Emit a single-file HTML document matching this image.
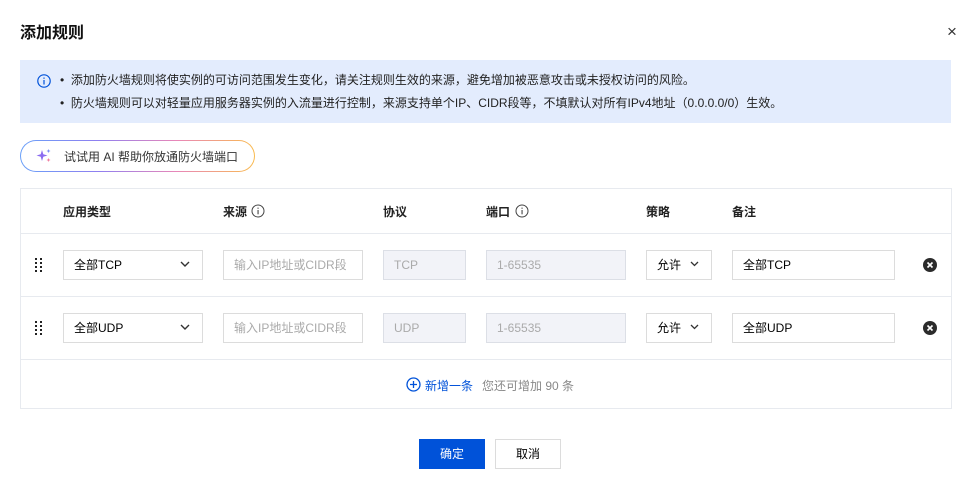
<!DOCTYPE html>
<html><head><meta charset="utf-8"><style>
*{box-sizing:border-box;margin:0;padding:0}
body{width:979px;height:487px;background:#fff;font-family:"Liberation Sans","Noto Sans CJK SC",sans-serif;color:#000;position:relative;overflow:hidden;font-size:12px}
.a{position:absolute}
.inp{position:absolute;height:30px;border:1px solid #dcdcdc;background:#fff;font-size:12px;line-height:28px;padding-left:10px;color:#000}
.dis{background:#f2f3f8;color:#aaa;border-color:#dcdfe6}
.ph{color:#aaa}
.hd{position:absolute;top:203px;font-weight:bold;font-size:12px;color:#222}
.hl{position:absolute;left:21px;width:930px;height:1px;background:#e7eaef}
</style></head><body>
<div class="a" style="left:20px;top:19px;font-size:16px;font-weight:bold;color:#111">添加规则</div>
<div class="a" style="left:947px;top:22px;font-size:17px;color:#333">×</div>

<div class="a" style="left:20px;top:60px;width:931px;height:63px;background:#e3ecfd"></div>
<svg class="a" style="left:37px;top:74px" width="14" height="14" viewBox="0 0 14 14"><circle cx="7" cy="7" r="6.2" fill="none" stroke="#0052d9" stroke-width="1.2"/><rect x="6.4" y="6" width="1.2" height="4.5" fill="#0052d9"/><rect x="6.4" y="3.5" width="1.2" height="1.3" fill="#0052d9"/></svg>
<div class="a" style="left:60px;top:72px;color:#222;line-height:16px">•&nbsp; 添加防火墙规则将使实例的可访问范围发生变化，请关注规则生效的来源，避免增加被恶意攻击或未授权访问的风险。</div>
<div class="a" style="left:60px;top:95px;color:#222;line-height:16px">•&nbsp; 防火墙规则可以对轻量应用服务器实例的入流量进行控制，来源支持单个IP、CIDR段等，不填默认对所有IPv4地址（0.0.0.0/0）生效。</div>

<div class="a" style="left:20px;top:140px;width:235px;height:32px;border-radius:16px;padding:1px;background:linear-gradient(90deg,#6aa0f8,#8f7ff0,#e887b8,#f9bb4f)"><div style="width:100%;height:100%;border-radius:15px;background:#fff"></div></div>
<svg class="a" style="left:36px;top:148px" width="16" height="16" viewBox="0 0 16 16"><path d="M6 2 L7.3 6.2 L11.5 7.5 L7.3 8.8 L6 13 L4.7 8.8 L0.5 7.5 L4.7 6.2Z" fill="#8b6cf0"/><path d="M12.5 1 L13.1 2.4 L14.5 3 L13.1 3.6 L12.5 5 L11.9 3.6 L10.5 3 L11.9 2.4Z" fill="#7b8ff5"/><path d="M12.5 10 L13.1 11.4 L14.5 12 L13.1 12.6 L12.5 14 L11.9 12.6 L10.5 12 L11.9 11.4Z" fill="#f07fa0"/></svg>
<div class="a" style="left:64px;top:148px;color:#333;font-size:12px">试试用 AI 帮助你放通防火墙端口</div>

<div class="a" style="left:20px;top:188px;width:932px;height:221px;border:1px solid #e7eaef"></div>
<div class="hl" style="top:233px"></div>
<div class="hl" style="top:296px"></div>
<div class="hl" style="top:359px"></div>

<div class="hd" style="left:63px">应用类型</div>
<div class="hd" style="left:223px">来源</div>
<svg class="a" style="left:251px;top:204px" width="14" height="14" viewBox="0 0 14 14"><circle cx="7" cy="7" r="6" fill="none" stroke="#444" stroke-width="1"/><rect x="6.5" y="6" width="1.1" height="4.3" fill="#444"/><rect x="6.5" y="3.6" width="1.1" height="1.2" fill="#444"/></svg>
<div class="hd" style="left:383px">协议</div>
<div class="hd" style="left:486px">端口</div>
<svg class="a" style="left:515px;top:204px" width="14" height="14" viewBox="0 0 14 14"><circle cx="7" cy="7" r="6" fill="none" stroke="#444" stroke-width="1"/><rect x="6.5" y="6" width="1.1" height="4.3" fill="#444"/><rect x="6.5" y="3.6" width="1.1" height="1.2" fill="#444"/></svg>
<div class="hd" style="left:646px">策略</div>
<div class="hd" style="left:732px">备注</div>

<!-- row1 -->
<svg class="a" style="left:35px;top:258px" width="8" height="14"><g fill="#222"><rect x="0" y="0" width="2" height="2"/><rect x="5" y="0" width="2" height="2"/><rect x="0" y="4" width="2" height="2"/><rect x="5" y="4" width="2" height="2"/><rect x="0" y="8" width="2" height="2"/><rect x="5" y="8" width="2" height="2"/><rect x="0" y="12" width="2" height="2"/><rect x="5" y="12" width="2" height="2"/></g></svg>
<div class="inp" style="left:63px;top:250px;width:140px">全部TCP</div>
<svg class="a" style="left:180px;top:261px" width="10" height="7"><path d="M1 1 L5 5 L9 1" fill="none" stroke="#333" stroke-width="1.4"/></svg>
<div class="inp ph" style="left:223px;top:250px;width:140px">输入IP地址或CIDR段</div>
<div class="inp dis" style="left:383px;top:250px;width:83px">TCP</div>
<div class="inp dis" style="left:486px;top:250px;width:140px">1-65535</div>
<div class="inp" style="left:646px;top:250px;width:66px">允许</div>
<svg class="a" style="left:690px;top:261px" width="9" height="6"><path d="M1 1 L4.5 4.5 L8 1" fill="none" stroke="#333" stroke-width="1.3"/></svg>
<div class="inp" style="left:732px;top:250px;width:163px">全部TCP</div>
<svg class="a" style="left:923px;top:258px" width="14" height="14"><circle cx="7" cy="7" r="7" fill="#2b2b2b"/><path d="M4.5 4.5 L9.5 9.5 M9.5 4.5 L4.5 9.5" stroke="#fff" stroke-width="1.6"/></svg>

<!-- row2 -->
<svg class="a" style="left:35px;top:321px" width="8" height="14"><g fill="#222"><rect x="0" y="0" width="2" height="2"/><rect x="5" y="0" width="2" height="2"/><rect x="0" y="4" width="2" height="2"/><rect x="5" y="4" width="2" height="2"/><rect x="0" y="8" width="2" height="2"/><rect x="5" y="8" width="2" height="2"/><rect x="0" y="12" width="2" height="2"/><rect x="5" y="12" width="2" height="2"/></g></svg>
<div class="inp" style="left:63px;top:313px;width:140px">全部UDP</div>
<svg class="a" style="left:180px;top:324px" width="10" height="7"><path d="M1 1 L5 5 L9 1" fill="none" stroke="#333" stroke-width="1.4"/></svg>
<div class="inp ph" style="left:223px;top:313px;width:140px">输入IP地址或CIDR段</div>
<div class="inp dis" style="left:383px;top:313px;width:83px">UDP</div>
<div class="inp dis" style="left:486px;top:313px;width:140px">1-65535</div>
<div class="inp" style="left:646px;top:313px;width:66px">允许</div>
<svg class="a" style="left:690px;top:324px" width="9" height="6"><path d="M1 1 L4.5 4.5 L8 1" fill="none" stroke="#333" stroke-width="1.3"/></svg>
<div class="inp" style="left:732px;top:313px;width:163px">全部UDP</div>
<svg class="a" style="left:923px;top:321px" width="14" height="14"><circle cx="7" cy="7" r="7" fill="#2b2b2b"/><path d="M4.5 4.5 L9.5 9.5 M9.5 4.5 L4.5 9.5" stroke="#fff" stroke-width="1.6"/></svg>

<svg class="a" style="left:406px;top:377px" width="15" height="15" viewBox="0 0 15 15"><circle cx="7.5" cy="7.5" r="6.5" fill="none" stroke="#0052d9" stroke-width="1.3"/><path d="M7.5 4 V11 M4 7.5 H11" stroke="#0052d9" stroke-width="1.3"/></svg>
<div class="a" style="left:425px;top:377px;color:#0052d9">新增一条</div>
<div class="a" style="left:482px;top:377px;color:#888">您还可增加 90 条</div>

<div class="a" style="left:419px;top:439px;width:66px;height:30px;background:#0052d9;color:#fff;text-align:center;line-height:30px">确定</div>
<div class="a" style="left:495px;top:439px;width:66px;height:30px;border:1px solid #dcdcdc;color:#000;text-align:center;line-height:28px">取消</div>
</body></html>
